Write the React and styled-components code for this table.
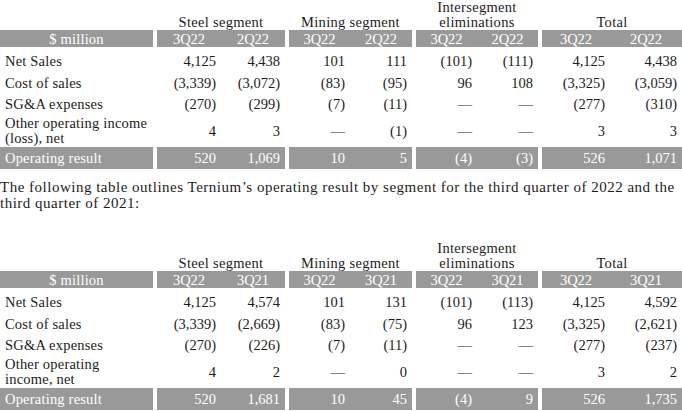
import React from 'react';
import styled, { createGlobalStyle } from 'styled-components';

const GlobalStyle = createGlobalStyle`
	html, body {
		margin: 0;
		padding: 0;
		background: #ffffff;
	}
	body {
		font-family: 'Liberation Serif', 'Times New Roman', serif;
		color: #1c1c1c;
	}
`;

const GREY = '#999999';

const GROUPS = [
	{ title: 'Steel segment', cols: [64, 64] },
	{ title: 'Mining segment', cols: [61, 62] },
	{ title: ['Intersegment', 'eliminations'], cols: [61, 61] },
	{ title: 'Total', cols: [68, 72] },
];

const Page = styled.div`
	width: 682px;
	font-size: 14.5px;
`;

const Row = styled.div`
	display: grid;
	grid-template-columns: 153px 128px 123px 122px 140px;
	column-gap: 4px;
	height: ${(p) => p.$h}px;
`;

const Title = styled.div`
	display: flex;
	flex-direction: column;
	justify-content: flex-end;
	align-items: center;
	text-align: center;
	line-height: 15px;
	padding-bottom: 2px;
	letter-spacing: 0.3px;
`;

const Group = styled.div`
	display: grid;
	grid-template-columns: ${(p) => p.$cols.map((c) => `${c}px`).join(' ')};
	background: ${(p) => (p.$shaded ? GREY : 'transparent')};
	color: ${(p) => (p.$shaded ? '#ffffff' : 'inherit')};
`;

const Label = styled.div`
	display: flex;
	align-items: center;
	justify-content: ${(p) => (p.$center ? 'center' : 'flex-start')};
	padding-left: ${(p) => (p.$center ? 0 : 5)}px;
	line-height: ${(p) => (p.$tight ? 15 : 16)}px;
	letter-spacing: 0.2px;
	background: ${(p) => (p.$shaded ? GREY : 'transparent')};
	color: ${(p) => (p.$shaded ? '#ffffff' : 'inherit')};
`;

const Cell = styled.div`
	display: flex;
	align-items: center;
	justify-content: ${(p) => (p.$center ? 'center' : 'flex-end')};
	padding-right: ${(p) => (p.$center ? 0 : 5)}px;
	line-height: 16px;
	white-space: nowrap;
`;

const Paragraph = styled.p`
	margin: 10px 0 30px;
	line-height: 16px;
	font-size: 15px;
	letter-spacing: 0.5px;
	white-space: nowrap;
`;

const Table = ({ periods, rows }) => (
	<div>
		<Row $h={30}>
			<div />
			{GROUPS.map((g, i) => (
				<Title key={i}>
					{Array.isArray(g.title) ? g.title.map((t) => <span key={t}>{t}</span>) : g.title}
				</Title>
			))}
		</Row>
		<Row $h={17}>
			<Label $center $shaded>
				$ million
			</Label>
			{GROUPS.map((g, i) => (
				<Group key={i} $cols={g.cols} $shaded>
					{periods.map((p) => (
						<Cell key={p} $center>
							{p}
						</Cell>
					))}
				</Group>
			))}
		</Row>
		{rows.map((r, ri) => (
			<Row key={ri} $h={r.h} style={ri === 0 ? { marginTop: 3 } : undefined}>
				<Label $tight={r.label.length > 1} $shaded={r.total}>
					<span>
						{r.label.map((l, li) => (
							<React.Fragment key={li}>
								{li > 0 && <br />}
								{l}
							</React.Fragment>
						))}
					</span>
				</Label>
				{GROUPS.map((g, gi) => (
					<Group key={gi} $cols={g.cols} $shaded={r.total}>
						<Cell>{r.values[gi * 2]}</Cell>
						<Cell>{r.values[gi * 2 + 1]}</Cell>
					</Group>
				))}
			</Row>
		))}
	</div>
);

const D = '\u2014';

const first = [
	{ label: ['Net Sales'], h: 22, values: ['4,125', '4,438', '101', '111', '(101)', '(111)', '4,125', '4,438'] },
	{ label: ['Cost of sales'], h: 21, values: ['(3,339)', '(3,072)', '(83)', '(95)', '96', '108', '(3,325)', '(3,059)'] },
	{ label: ['SG&A expenses'], h: 22, values: ['(270)', '(299)', '(7)', '(11)', D, D, '(277)', '(310)'] },
	{ label: ['Other operating income', '(loss), net'], h: 32, values: ['4', '3', D, '(1)', D, D, '3', '3'] },
	{ label: ['Operating result'], h: 22, total: true, values: ['520', '1,069', '10', '5', '(4)', '(3)', '526', '1,071'] },
];

const second = [
	{ label: ['Net Sales'], h: 22, values: ['4,125', '4,574', '101', '131', '(101)', '(113)', '4,125', '4,592'] },
	{ label: ['Cost of sales'], h: 21, values: ['(3,339)', '(2,669)', '(83)', '(75)', '96', '123', '(3,325)', '(2,621)'] },
	{ label: ['SG&A expenses'], h: 22, values: ['(270)', '(226)', '(7)', '(11)', D, D, '(277)', '(237)'] },
	{ label: ['Other operating', 'income, net'], h: 32, values: ['4', '2', D, '0', D, D, '3', '2'] },
	{ label: ['Operating result'], h: 22, total: true, values: ['520', '1,681', '10', '45', '(4)', '9', '526', '1,735'] },
];

const App = () => (
	<>
		<GlobalStyle />
		<Page>
			<Table periods={['3Q22', '2Q22']} rows={first} />
			<Paragraph>
				The following table outlines Ternium’s operating result by segment for the third quarter of 2022 and the
				<br />
				third quarter of 2021:
			</Paragraph>
			<Table periods={['3Q22', '3Q21']} rows={second} />
		</Page>
	</>
);

export default App;
